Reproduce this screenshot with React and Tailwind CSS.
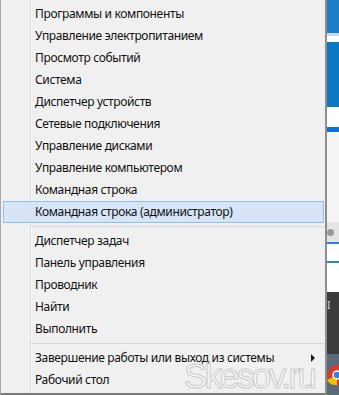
import React from "react";

const group1 = [
  "Программы и компоненты",
  "Управление электропитанием",
  "Просмотр событий",
  "Система",
  "Диспетчер устройств",
  "Сетевые подключения",
  "Управление дисками",
  "Управление компьютером",
  "Командная строка",
];
const group2 = ["Диспетчер задач", "Панель управления", "Проводник", "Найти", "Выполнить"];

function Item({ label, active, arrow }) {
  return (
    <div
      className={
        "ml-[2px] mr-[1px] h-[22px] flex items-center pl-[31px] pr-[8px] border " +
        (active ? "bg-[#d5e5f6] border-[#93c0ee]" : "border-transparent")
      }
    >
      <span className="flex-1 whitespace-nowrap">{label}</span>
      {arrow && (
        <span className="w-0 h-0 border-y-[4px] border-y-transparent border-l-[4px] border-l-[#1a1a1a]" />
      )}
    </div>
  );
}

function Sep() {
  return (
    <div className="h-[7px] flex items-start pt-[3px] pl-[30px] mr-[1px]">
      <div className="flex-1 h-[1px] bg-[#d7d7d7]" />
    </div>
  );
}

export default function App() {
  return (
    <div className="w-[339px] h-[395px] flex overflow-hidden relative font-['Noto_Sans',sans-serif] text-[12px] tracking-[-0.35px] text-[#111]">
      <div className="w-[329px] h-[395px] flex flex-col bg-[#f0f0f0] border-l border-l-[#a9a9a9] border-r-2 border-r-[#8e8e8e] border-b-2 border-b-[#7a7a7a] pt-[3px] bg-[linear-gradient(to_right,transparent_29px,#dcdcdc_29px,#dcdcdc_30px,#fbfbfb_30px,#fbfbfb_31px,transparent_31px)]">
        {group1.map((l) => (
          <Item key={l} label={l} />
        ))}
        <Item label="Командная строка (администратор)" active />
        <Sep />
        {group2.map((l) => (
          <Item key={l} label={l} />
        ))}
        <Sep />
        <Item label="Завершение работы или выход из системы" arrow />
        <Item label="Рабочий стол" />
      </div>
      <div className="flex-1 h-[395px] flex flex-col">
        <div className="h-[33px] bg-[#1d7cc4]" />
        <div className="h-[3px] bg-[#c3dcf0]" />
        <div className="h-[6px] bg-white" />
        <div className="h-[65px] bg-[#0b78c4]" />
        <div className="h-[20px] bg-white" />
        <div className="h-[5px] bg-[#0a72e0]" />
        <div className="h-[90px] bg-[#f5f5f5]" />
        <div className="h-[20px] bg-[#e4e4e4] flex items-center">
          <div className="w-[7px] h-[7px] rounded-full bg-[#999]" />
        </div>
        <div className="h-[2px] bg-[#2a82e0]" />
        <div className="h-[17px] bg-white" />
        <div className="h-[2px] bg-[#2a82e0]" />
        <div className="h-[29px] bg-white" />
        <div className="h-[62px] bg-[#3c3c3c] text-[#ddd] text-[10px] leading-none pt-[8px]">I</div>
        <div className="flex-1 bg-[#5a6a78] flex items-center">
          <svg width="12" height="24" viewBox="0 0 12 24">
            <circle cx="10" cy="12" r="10" fill="#d93a2f" />
            <path d="M10 12 L0 17 A10 10 0 0 0 10 22 Z" fill="#f2c200" />
            <circle cx="10" cy="12" r="4" fill="#3a7fe0" stroke="white" strokeWidth="1.5" />
          </svg>
        </div>
      </div>
      <span className="absolute left-[184px] top-[358px] text-[35px] leading-none font-['Liberation_Sans',sans-serif] tracking-[-2.5px] text-white/30 [-webkit-text-stroke:1px_rgba(185,185,185,0.7)]">
        Skesov.ru
      </span>
    </div>
  );
}
